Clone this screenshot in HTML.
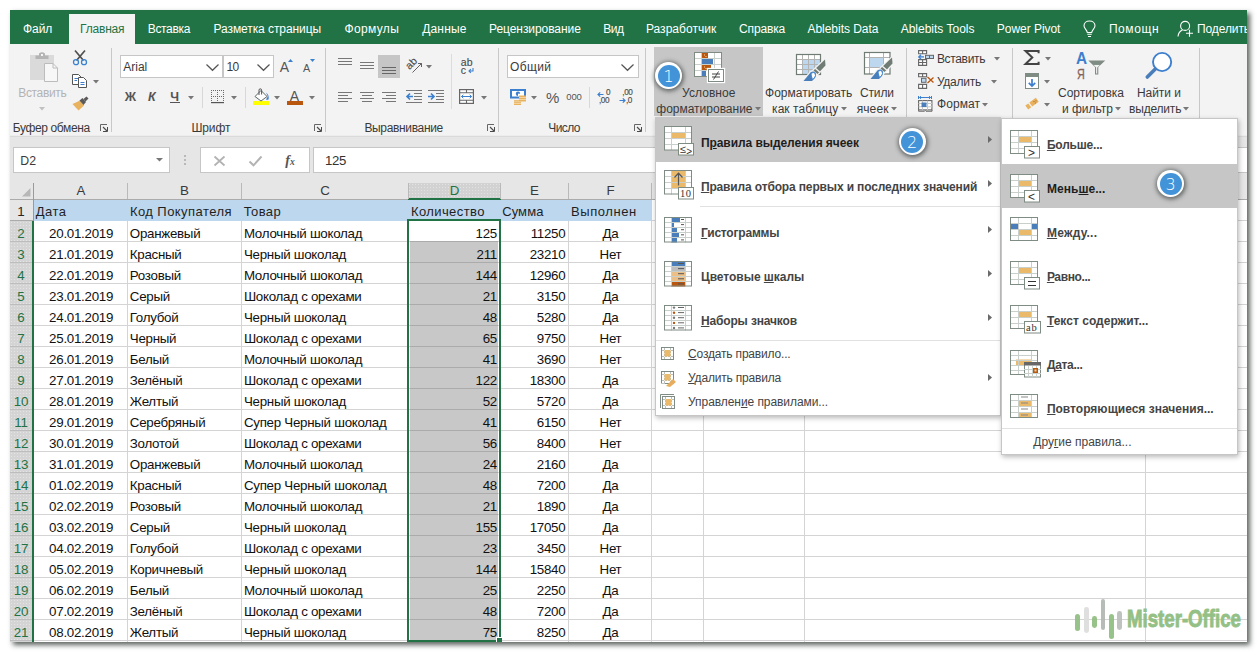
<!DOCTYPE html>
<html lang="ru"><head><meta charset="utf-8"><title>Excel</title><style>
html,body{margin:0;padding:0;background:#fff;}
body{width:1258px;height:653px;overflow:hidden;position:relative;font-family:"Liberation Sans",sans-serif;}
#win{position:absolute;left:10px;top:10px;width:1237px;height:632px;overflow:hidden;background:#fff;box-shadow:3px 3px 5px 0 rgba(30,40,35,.72);}
#win div,#win span,#win svg{position:absolute;}
#win span{white-space:pre;line-height:normal;}
#win svg{overflow:visible;}
</style></head><body><div id="win">
<div style="left:0px;top:0px;width:1237px;height:34px;background:#217346;"></div>
<div style="left:0px;top:34px;width:1237px;height:92px;background:#f3f3f3;"></div>
<div style="left:0px;top:126px;width:1237px;height:64px;background:#e6e6e6;"></div>
<div style="left:0px;top:125px;width:1237px;height:1px;background:#ededed;"></div>
<div style="left:0px;top:126px;width:1237px;height:1px;background:#dadada;"></div>
<div style="left:59px;top:4px;width:66px;height:30px;background:#f3f3f3;"></div>
<span id="t1" style="top:11.74px;font-size:12px;color:#fff;letter-spacing:-0.029px;left:12.9px;">Файл</span>
<span id="t2" style="top:11.74px;font-size:12px;color:#217346;letter-spacing:-0.184px;left:70px;">Главная</span>
<span id="t3" style="top:11.74px;font-size:12px;color:#fff;letter-spacing:-0.316px;left:137.7px;">Вставка</span>
<span id="t4" style="top:11.74px;font-size:12px;color:#fff;letter-spacing:-0.081px;left:203.5px;">Разметка страницы</span>
<span id="t5" style="top:11.74px;font-size:12px;color:#fff;letter-spacing:0.369px;left:334.4px;">Формулы</span>
<span id="t6" style="top:11.74px;font-size:12px;color:#fff;letter-spacing:0.173px;left:412.2px;">Данные</span>
<span id="t7" style="top:11.74px;font-size:12px;color:#fff;letter-spacing:-0.062px;left:479px;">Рецензирование</span>
<span id="t8" style="top:11.74px;font-size:12px;color:#fff;letter-spacing:-0.473px;left:593.2px;">Вид</span>
<span id="t9" style="top:11.74px;font-size:12px;color:#fff;letter-spacing:0.038px;left:635.9px;">Разработчик</span>
<span id="t10" style="top:11.74px;font-size:12px;color:#fff;letter-spacing:-0.14px;left:729px;">Справка</span>
<span id="t11" style="top:11.74px;font-size:12px;color:#fff;letter-spacing:-0.037px;left:797.5px;">Ablebits Data</span>
<span id="t12" style="top:11.74px;font-size:12px;color:#fff;letter-spacing:-0.002px;left:890.7px;">Ablebits Tools</span>
<span id="t13" style="top:11.74px;font-size:12px;color:#fff;letter-spacing:-0.039px;left:986.8px;">Power Pivot</span>
<span id="t14" style="top:11.74px;font-size:12px;color:#fff;letter-spacing:0.578px;left:1098.9px;">Помощн</span>
<span id="t15" style="top:11.74px;font-size:12px;color:#fff;letter-spacing:-0.1px;left:1187px;">Поделиться</span>
<div style="left:101px;top:38px;width:1px;height:84px;background:#c8c8c8;"></div>
<div style="left:315px;top:38px;width:1px;height:84px;background:#c8c8c8;"></div>
<div style="left:488px;top:38px;width:1px;height:84px;background:#c8c8c8;"></div>
<div style="left:635px;top:38px;width:1px;height:84px;background:#c8c8c8;"></div>
<div style="left:896px;top:38px;width:1px;height:84px;background:#c8c8c8;"></div>
<div style="left:1002px;top:38px;width:1px;height:84px;background:#c8c8c8;"></div>
<div style="left:1189px;top:38px;width:1px;height:84px;background:#c8c8c8;"></div>
<div style="left:192px;top:77px;width:1px;height:21px;background:#d8d8d8;"></div>
<div style="left:235px;top:77px;width:1px;height:21px;background:#d8d8d8;"></div>
<div style="left:579px;top:77px;width:1px;height:21px;background:#d8d8d8;"></div>
<div style="left:441px;top:44px;width:1px;height:55px;background:#dcdcdc;"></div>
<span id="t16" style="top:111.24px;font-size:12px;color:#3a3a3a;letter-spacing:-0.362px;left:2.7px;">Буфер обмена</span>
<span id="t17" style="top:111.24px;font-size:12px;color:#3a3a3a;letter-spacing:-0.097px;left:181.4px;">Шрифт</span>
<span id="t18" style="top:111.24px;font-size:12px;color:#3a3a3a;letter-spacing:-0.342px;left:354.4px;">Выравнивание</span>
<span id="t19" style="top:111.24px;font-size:12px;color:#3a3a3a;letter-spacing:-0.603px;left:538.3px;">Число</span>
<svg style="left:90px;top:114px;" width="9" height="9" viewBox="0 0 9 9"><path d="M0.5 7V0.5H7" fill="none" stroke="#666" stroke-width="1"/><path d="M3 3L7 7" fill="none" stroke="#4a4a4a" stroke-width="1.1"/><path d="M7.5 3V7.5H3" fill="none" stroke="#4a4a4a" stroke-width="1"/></svg>
<svg style="left:304px;top:114px;" width="9" height="9" viewBox="0 0 9 9"><path d="M0.5 7V0.5H7" fill="none" stroke="#666" stroke-width="1"/><path d="M3 3L7 7" fill="none" stroke="#4a4a4a" stroke-width="1.1"/><path d="M7.5 3V7.5H3" fill="none" stroke="#4a4a4a" stroke-width="1"/></svg>
<svg style="left:477px;top:114px;" width="9" height="9" viewBox="0 0 9 9"><path d="M0.5 7V0.5H7" fill="none" stroke="#666" stroke-width="1"/><path d="M3 3L7 7" fill="none" stroke="#4a4a4a" stroke-width="1.1"/><path d="M7.5 3V7.5H3" fill="none" stroke="#4a4a4a" stroke-width="1"/></svg>
<svg style="left:624px;top:114px;" width="9" height="9" viewBox="0 0 9 9"><path d="M0.5 7V0.5H7" fill="none" stroke="#666" stroke-width="1"/><path d="M3 3L7 7" fill="none" stroke="#4a4a4a" stroke-width="1.1"/><path d="M7.5 3V7.5H3" fill="none" stroke="#4a4a4a" stroke-width="1"/></svg>
<span id="t20" style="top:75.54px;font-size:12px;color:#b3b3b3;letter-spacing:-0.347px;left:8.3px;">Вставить</span>
<svg style="left:29.4px;top:96.8px;" width="6" height="4" viewBox="0 0 6 4"><path d="M0 0h6l-3 3.5z" fill="#c0c0c0"/></svg>
<svg style="left:83.3px;top:70px;" width="6" height="4" viewBox="0 0 6 4"><path d="M0 0h6l-3 3.5z" fill="#777"/></svg>
<div style="left:110px;top:45px;width:103px;height:23px;background:#fff;box-sizing:border-box;border:1px solid #c6c6c6;"></div>
<div style="left:213px;top:45px;width:51px;height:23px;background:#fff;box-sizing:border-box;border:1px solid #c6c6c6;"></div>
<span id="t21" style="top:49.94px;font-size:12px;color:#3a3a3a;letter-spacing:0.017px;left:113.2px;">Arial</span>
<span id="t22" style="top:49.94px;font-size:12px;color:#3a3a3a;letter-spacing:-0.68px;left:216.4px;">10</span>
<svg style="left:196px;top:54px;" width="13" height="7" viewBox="0 0 13 7"><path d="M0.5 0.5L6.5 6.3L12.5 0.5" fill="none" stroke="#555" stroke-width="1.2"/></svg>
<svg style="left:247.4px;top:54px;" width="13" height="7" viewBox="0 0 13 7"><path d="M0.5 0.5L6.5 6.3L12.5 0.5" fill="none" stroke="#555" stroke-width="1.2"/></svg>
<span id="t23" style="top:48.73px;font-size:14px;color:#555;left:269.8px;">A</span>
<span id="t24" style="top:51.63px;font-size:10.8px;color:#555;left:293px;">A</span>
<svg style="left:278px;top:49px;" width="5" height="3" viewBox="0 0 5 3"><path d="M0 3L2.5 0L5 3z" fill="#3b7fce"/></svg>
<svg style="left:300px;top:49px;" width="5" height="3" viewBox="0 0 5 3"><path d="M0 0L2.5 3L5 0z" fill="#3b7fce"/></svg>
<span id="t25" style="top:79.69px;font-size:12.5px;color:#555;font-weight:700;letter-spacing:2.488px;left:114.7px;">Ж</span>
<span id="t26" style="top:79.69px;font-size:12.5px;color:#555;font-weight:700;font-style:italic;letter-spacing:2.113px;left:138.1px;">К</span>
<span id="t27" style="top:79.69px;font-size:12.5px;color:#555;font-weight:700;letter-spacing:1.303px;left:160.3px;">Ч</span>
<div style="left:160px;top:92px;width:10px;height:1.3px;background:#555;"></div>
<svg style="left:178.3px;top:85.9px;" width="6" height="4" viewBox="0 0 6 4"><path d="M0 0h6l-3 3.5z" fill="#777"/></svg>
<svg style="left:221.3px;top:85.9px;" width="6" height="4" viewBox="0 0 6 4"><path d="M0 0h6l-3 3.5z" fill="#777"/></svg>
<svg style="left:264.4px;top:85.9px;" width="6" height="4" viewBox="0 0 6 4"><path d="M0 0h6l-3 3.5z" fill="#777"/></svg>
<svg style="left:298.5px;top:85.9px;" width="6" height="4" viewBox="0 0 6 4"><path d="M0 0h6l-3 3.5z" fill="#777"/></svg>
<div style="left:243px;top:91px;width:16px;height:4px;background:#ffff00;"></div>
<div style="left:277px;top:91px;width:16px;height:4px;background:#b8570d;"></div>
<span id="t28" style="top:77.83px;font-size:14px;color:#555;left:279.7px;">A</span>
<div style="left:368px;top:45px;width:22px;height:23px;background:#c6c6c6;"></div>
<div style="left:328px;top:48px;width:14px;height:1px;background:#777;"></div>
<div style="left:328px;top:51px;width:14px;height:1px;background:#777;"></div>
<div style="left:328px;top:54px;width:14px;height:1px;background:#777;"></div>
<div style="left:350px;top:52px;width:14px;height:1px;background:#777;"></div>
<div style="left:350px;top:55px;width:14px;height:1px;background:#777;"></div>
<div style="left:350px;top:58px;width:14px;height:1px;background:#777;"></div>
<div style="left:372px;top:57px;width:14px;height:1px;background:#666;"></div>
<div style="left:372px;top:60px;width:14px;height:1px;background:#666;"></div>
<div style="left:372px;top:63px;width:14px;height:1px;background:#666;"></div>
<div style="left:328px;top:82px;width:14px;height:1px;background:#777;"></div>
<div style="left:328px;top:85px;width:10px;height:1px;background:#777;"></div>
<div style="left:328px;top:88px;width:14px;height:1px;background:#777;"></div>
<div style="left:328px;top:91px;width:10px;height:1px;background:#777;"></div>
<div style="left:350px;top:82px;width:14px;height:1px;background:#777;"></div>
<div style="left:352px;top:85px;width:10px;height:1px;background:#777;"></div>
<div style="left:350px;top:88px;width:14px;height:1px;background:#777;"></div>
<div style="left:352px;top:91px;width:10px;height:1px;background:#777;"></div>
<div style="left:372px;top:82px;width:14px;height:1px;background:#777;"></div>
<div style="left:376px;top:85px;width:10px;height:1px;background:#777;"></div>
<div style="left:372px;top:88px;width:14px;height:1px;background:#777;"></div>
<div style="left:376px;top:91px;width:10px;height:1px;background:#777;"></div>
<div style="left:396px;top:80px;width:16px;height:1px;background:#777;"></div>
<div style="left:404px;top:83px;width:8px;height:1px;background:#777;"></div>
<div style="left:404px;top:86px;width:8px;height:1px;background:#777;"></div>
<div style="left:404px;top:89px;width:8px;height:1px;background:#777;"></div>
<div style="left:396px;top:92px;width:16px;height:1px;background:#777;"></div>
<div style="left:418px;top:80px;width:16px;height:1px;background:#777;"></div>
<div style="left:426px;top:83px;width:8px;height:1px;background:#777;"></div>
<div style="left:426px;top:86px;width:8px;height:1px;background:#777;"></div>
<div style="left:426px;top:89px;width:8px;height:1px;background:#777;"></div>
<div style="left:418px;top:92px;width:16px;height:1px;background:#777;"></div>
<svg style="left:396px;top:82px;" width="8" height="9" viewBox="0 0 8 9"><path d="M7 4.5H1M4 1.5L1 4.5L4 7.5" fill="none" stroke="#3b7fce" stroke-width="1.6"/></svg>
<svg style="left:418px;top:82px;" width="8" height="9" viewBox="0 0 8 9"><path d="M0 4.5H6M3 1.5L6 4.5L3 7.5" fill="none" stroke="#3b7fce" stroke-width="1.6"/></svg>
<svg style="left:415.5px;top:55.1px;" width="6" height="4" viewBox="0 0 6 4"><path d="M0 0h6l-3 3.5z" fill="#777"/></svg>
<svg style="left:470.5px;top:85.9px;" width="6" height="4" viewBox="0 0 6 4"><path d="M0 0h6l-3 3.5z" fill="#777"/></svg>
<svg style="left:521.4px;top:85.9px;" width="6" height="4" viewBox="0 0 6 4"><path d="M0 0h6l-3 3.5z" fill="#777"/></svg>
<div style="left:497px;top:45px;width:132px;height:23px;background:#fff;box-sizing:border-box;border:1px solid #c6c6c6;"></div>
<span id="t29" style="top:49.94px;font-size:12px;color:#3a3a3a;letter-spacing:0.42px;left:499.9px;">Общий</span>
<svg style="left:611.2px;top:54px;" width="13" height="7" viewBox="0 0 13 7"><path d="M0.5 0.5L6.5 6.3L12.5 0.5" fill="none" stroke="#555" stroke-width="1.2"/></svg>
<span id="t30" style="top:79.02px;font-size:15px;color:#555;letter-spacing:-0.144px;left:536px;">%</span>
<span id="t31" style="top:81.20px;font-size:9.5px;color:#555;letter-spacing:-0.153px;left:556.3px;">000</span>
<div style="left:644px;top:37px;width:109px;height:69px;background:#c6c6c6;"></div>
<span id="t32" style="top:75.64px;font-size:12px;color:#3a3a3a;letter-spacing:0.064px;left:672px;">Условное</span>
<span id="t33" style="top:92.04px;font-size:12px;color:#3a3a3a;letter-spacing:-0.011px;left:646.3px;">форматирование</span>
<svg style="left:744.5px;top:96.8px;" width="6" height="4" viewBox="0 0 6 4"><path d="M0 0h6l-3 3.5z" fill="#777"/></svg>
<span id="t34" style="top:75.64px;font-size:12px;color:#3a3a3a;letter-spacing:0.009px;left:755px;">Форматировать</span>
<span id="t35" style="top:92.04px;font-size:12px;color:#3a3a3a;letter-spacing:0.044px;left:762.1px;">как таблицу</span>
<svg style="left:830.7px;top:96.8px;" width="6" height="4" viewBox="0 0 6 4"><path d="M0 0h6l-3 3.5z" fill="#777"/></svg>
<span id="t36" style="top:75.64px;font-size:12px;color:#3a3a3a;letter-spacing:-0.156px;left:850px;">Стили</span>
<span id="t37" style="top:92.04px;font-size:12px;color:#3a3a3a;letter-spacing:0.088px;left:846.7px;">ячеек</span>
<svg style="left:880.6px;top:96.8px;" width="6" height="4" viewBox="0 0 6 4"><path d="M0 0h6l-3 3.5z" fill="#777"/></svg>
<span id="t38" style="top:41.64px;font-size:12px;color:#3a3a3a;letter-spacing:-0.334px;left:926.9px;">Вставить</span>
<span id="t39" style="top:64.74px;font-size:12px;color:#3a3a3a;letter-spacing:-0.247px;left:926.9px;">Удалить</span>
<span id="t40" style="top:87.34px;font-size:12px;color:#3a3a3a;letter-spacing:0.077px;left:927.1px;">Формат</span>
<svg style="left:984.4px;top:47.2px;" width="6" height="4" viewBox="0 0 6 4"><path d="M0 0h6l-3 3.5z" fill="#777"/></svg>
<svg style="left:980.8px;top:70.1px;" width="6" height="4" viewBox="0 0 6 4"><path d="M0 0h6l-3 3.5z" fill="#777"/></svg>
<svg style="left:972.4px;top:93px;" width="6" height="4" viewBox="0 0 6 4"><path d="M0 0h6l-3 3.5z" fill="#777"/></svg>
<svg style="left:1035.3px;top:46.6px;" width="6" height="4" viewBox="0 0 6 4"><path d="M0 0h6l-3 3.5z" fill="#777"/></svg>
<svg style="left:1033.6px;top:69.7px;" width="6" height="4" viewBox="0 0 6 4"><path d="M0 0h6l-3 3.5z" fill="#777"/></svg>
<svg style="left:1033.6px;top:92.7px;" width="6" height="4" viewBox="0 0 6 4"><path d="M0 0h6l-3 3.5z" fill="#777"/></svg>
<span id="t41" style="top:75.64px;font-size:12px;color:#3a3a3a;letter-spacing:0.014px;left:1048px;">Сортировка</span>
<span id="t42" style="top:92.04px;font-size:12px;color:#3a3a3a;letter-spacing:-0.026px;left:1052px;">и фильтр</span>
<svg style="left:1105.3px;top:96.8px;" width="6" height="4" viewBox="0 0 6 4"><path d="M0 0h6l-3 3.5z" fill="#777"/></svg>
<span id="t43" style="top:75.64px;font-size:12px;color:#3a3a3a;letter-spacing:-0.04px;left:1126.9px;">Найти и</span>
<span id="t44" style="top:92.04px;font-size:12px;color:#3a3a3a;letter-spacing:-0.204px;left:1119.1px;">выделить</span>
<svg style="left:1173.4px;top:96.8px;" width="6" height="4" viewBox="0 0 6 4"><path d="M0 0h6l-3 3.5z" fill="#777"/></svg>
<div style="left:3px;top:137px;width:157px;height:26px;background:#fff;box-sizing:border-box;border:1px solid #c6c6c6;"></div>
<div style="left:190px;top:137px;width:110px;height:26px;background:#fff;box-sizing:border-box;border:1px solid #c6c6c6;"></div>
<div style="left:303px;top:137px;width:940px;height:26px;background:#fff;box-sizing:border-box;border:1px solid #c6c6c6;"></div>
<span id="t45" style="top:144.17px;font-size:12.3px;color:#3a3a3a;letter-spacing:0.033px;left:10.3px;">D2</span>
<svg style="left:146px;top:148.3px;" width="7" height="4" viewBox="0 0 7 4"><path d="M0 0h7l-3.5 3.5z" fill="#777"/></svg>
<div style="left:174px;top:145px;width:2px;height:2px;background:#b9b9b9;"></div>
<div style="left:174px;top:149px;width:2px;height:2px;background:#b9b9b9;"></div>
<div style="left:174px;top:153px;width:2px;height:2px;background:#b9b9b9;"></div>
<svg style="left:203.6px;top:145.6px;" width="11" height="10" viewBox="0 0 11 10"><path d="M0.5 0.5L10.5 9.5M10.5 0.5L0.5 9.5" stroke="#b2b2b2" stroke-width="1.700" fill="none"/></svg>
<svg style="left:238.8px;top:145.6px;" width="13" height="10" viewBox="0 0 13 10"><path d="M0.5 5.5L4.5 9.3L12.5 0.5" stroke="#b2b2b2" stroke-width="1.900" fill="none"/></svg>
<span id="t46" style="top:142.53px;font-size:14px;color:#555;font-weight:700;font-style:italic;font-family:'Liberation Serif',serif;left:275.2px;">f</span>
<span id="t47" style="top:146.74px;font-size:9.5px;color:#555;font-weight:700;font-style:italic;font-family:'Liberation Serif',serif;left:280.1px;">x</span>
<span id="t48" style="top:143.35px;font-size:13.2px;color:#333;letter-spacing:-0.272px;left:315px;">125</span>
<div style="left:0px;top:190px;width:1237px;height:442px;background:#fff;"></div>
<div style="left:24px;top:210px;width:1213px;height:1px;background:#d4d4d4;"></div>
<div style="left:24px;top:231px;width:1213px;height:1px;background:#d4d4d4;"></div>
<div style="left:24px;top:252px;width:1213px;height:1px;background:#d4d4d4;"></div>
<div style="left:24px;top:273px;width:1213px;height:1px;background:#d4d4d4;"></div>
<div style="left:24px;top:294px;width:1213px;height:1px;background:#d4d4d4;"></div>
<div style="left:24px;top:315px;width:1213px;height:1px;background:#d4d4d4;"></div>
<div style="left:24px;top:336px;width:1213px;height:1px;background:#d4d4d4;"></div>
<div style="left:24px;top:357px;width:1213px;height:1px;background:#d4d4d4;"></div>
<div style="left:24px;top:378px;width:1213px;height:1px;background:#d4d4d4;"></div>
<div style="left:24px;top:399px;width:1213px;height:1px;background:#d4d4d4;"></div>
<div style="left:24px;top:420px;width:1213px;height:1px;background:#d4d4d4;"></div>
<div style="left:24px;top:441px;width:1213px;height:1px;background:#d4d4d4;"></div>
<div style="left:24px;top:462px;width:1213px;height:1px;background:#d4d4d4;"></div>
<div style="left:24px;top:483px;width:1213px;height:1px;background:#d4d4d4;"></div>
<div style="left:24px;top:504px;width:1213px;height:1px;background:#d4d4d4;"></div>
<div style="left:24px;top:525px;width:1213px;height:1px;background:#d4d4d4;"></div>
<div style="left:24px;top:546px;width:1213px;height:1px;background:#d4d4d4;"></div>
<div style="left:24px;top:567px;width:1213px;height:1px;background:#d4d4d4;"></div>
<div style="left:24px;top:588px;width:1213px;height:1px;background:#d4d4d4;"></div>
<div style="left:24px;top:609px;width:1213px;height:1px;background:#d4d4d4;"></div>
<div style="left:24px;top:630px;width:1213px;height:1px;background:#d4d4d4;"></div>
<div style="left:117px;top:190px;width:1px;height:442px;background:#d4d4d4;"></div>
<div style="left:231px;top:190px;width:1px;height:442px;background:#d4d4d4;"></div>
<div style="left:398px;top:190px;width:1px;height:442px;background:#d4d4d4;"></div>
<div style="left:490px;top:190px;width:1px;height:442px;background:#d4d4d4;"></div>
<div style="left:558px;top:190px;width:1px;height:442px;background:#d4d4d4;"></div>
<div style="left:641px;top:190px;width:1px;height:442px;background:#d4d4d4;"></div>
<div style="left:693px;top:190px;width:1px;height:442px;background:#d4d4d4;"></div>
<div style="left:794px;top:190px;width:1px;height:442px;background:#d4d4d4;"></div>
<div style="left:1135px;top:190px;width:1px;height:442px;background:#d4d4d4;"></div>
<div style="left:398px;top:173px;width:92px;height:16px;background:#d2d2d2;background-image:radial-gradient(circle,#e2e2e2 0.700px,transparent 0.900px);background-size:3px 3px;"></div>
<div style="left:0px;top:189px;width:1237px;height:1px;background:#ababab;"></div>
<div style="left:398px;top:188px;width:93px;height:2px;background:#217346;"></div>
<div style="left:23px;top:173px;width:1px;height:16px;background:#b9b9b9;"></div>
<div style="left:117px;top:173px;width:1px;height:16px;background:#b9b9b9;"></div>
<div style="left:231px;top:173px;width:1px;height:16px;background:#b9b9b9;"></div>
<div style="left:398px;top:173px;width:1px;height:16px;background:#b9b9b9;"></div>
<div style="left:490px;top:173px;width:1px;height:16px;background:#b9b9b9;"></div>
<div style="left:558px;top:173px;width:1px;height:16px;background:#b9b9b9;"></div>
<div style="left:641px;top:173px;width:1px;height:16px;background:#b9b9b9;"></div>
<div style="left:693px;top:173px;width:1px;height:16px;background:#b9b9b9;"></div>
<div style="left:794px;top:173px;width:1px;height:16px;background:#b9b9b9;"></div>
<div style="left:1135px;top:173px;width:1px;height:16px;background:#b9b9b9;"></div>
<svg style="left:11.5px;top:177.5px;" width="8.5" height="8.5" viewBox="0 0 8.5 8.5"><path d="M8.500 0V8.500H0z" fill="#b7b7b7"/></svg>
<span id="t49" style="top:173.34px;font-size:13.33px;color:#3a3a3a;left:-29px;width:200px;text-align:center;">A</span>
<span id="t50" style="top:173.34px;font-size:13.33px;color:#3a3a3a;left:74.5px;width:200px;text-align:center;">B</span>
<span id="t51" style="top:173.34px;font-size:13.33px;color:#3a3a3a;left:215px;width:200px;text-align:center;">C</span>
<span id="t52" style="top:173.34px;font-size:13.33px;color:#217346;left:344.5px;width:200px;text-align:center;">D</span>
<span id="t53" style="top:173.34px;font-size:13.33px;color:#3a3a3a;left:424.5px;width:200px;text-align:center;">E</span>
<span id="t54" style="top:173.34px;font-size:13.33px;color:#3a3a3a;left:500.5px;width:200px;text-align:center;">F</span>
<div style="left:0px;top:190px;width:23px;height:21px;background:#e6e6e6;"></div>
<div style="left:0px;top:211px;width:23px;height:421px;background:#d4d4d4;background-image:radial-gradient(circle,#e4e4e4 0.700px,transparent 0.900px);background-size:3px 3px;"></div>
<div style="left:0px;top:210px;width:23px;height:1px;background:#ababab;"></div>
<div style="left:0px;top:231px;width:23px;height:1px;background:#bdbdbd;"></div>
<div style="left:0px;top:252px;width:23px;height:1px;background:#bdbdbd;"></div>
<div style="left:0px;top:273px;width:23px;height:1px;background:#bdbdbd;"></div>
<div style="left:0px;top:294px;width:23px;height:1px;background:#bdbdbd;"></div>
<div style="left:0px;top:315px;width:23px;height:1px;background:#bdbdbd;"></div>
<div style="left:0px;top:336px;width:23px;height:1px;background:#bdbdbd;"></div>
<div style="left:0px;top:357px;width:23px;height:1px;background:#bdbdbd;"></div>
<div style="left:0px;top:378px;width:23px;height:1px;background:#bdbdbd;"></div>
<div style="left:0px;top:399px;width:23px;height:1px;background:#bdbdbd;"></div>
<div style="left:0px;top:420px;width:23px;height:1px;background:#bdbdbd;"></div>
<div style="left:0px;top:441px;width:23px;height:1px;background:#bdbdbd;"></div>
<div style="left:0px;top:462px;width:23px;height:1px;background:#bdbdbd;"></div>
<div style="left:0px;top:483px;width:23px;height:1px;background:#bdbdbd;"></div>
<div style="left:0px;top:504px;width:23px;height:1px;background:#bdbdbd;"></div>
<div style="left:0px;top:525px;width:23px;height:1px;background:#bdbdbd;"></div>
<div style="left:0px;top:546px;width:23px;height:1px;background:#bdbdbd;"></div>
<div style="left:0px;top:567px;width:23px;height:1px;background:#bdbdbd;"></div>
<div style="left:0px;top:588px;width:23px;height:1px;background:#bdbdbd;"></div>
<div style="left:0px;top:609px;width:23px;height:1px;background:#bdbdbd;"></div>
<div style="left:0px;top:630px;width:23px;height:1px;background:#bdbdbd;"></div>
<div style="left:23px;top:173px;width:1px;height:38px;background:#9a9a9a;"></div>
<div style="left:22px;top:211px;width:2px;height:421px;background:#217346;"></div>
<span id="t55" style="top:194.04px;font-size:13.33px;color:#262626;letter-spacing:-0.3px;left:-89.1px;width:200px;text-align:center;">1</span>
<span id="t56" style="top:215.74px;font-size:13.33px;color:#217346;letter-spacing:-0.3px;left:-89.1px;width:200px;text-align:center;">2</span>
<span id="t57" style="top:236.74px;font-size:13.33px;color:#217346;letter-spacing:-0.3px;left:-89.1px;width:200px;text-align:center;">3</span>
<span id="t58" style="top:257.74px;font-size:13.33px;color:#217346;letter-spacing:-0.3px;left:-89.1px;width:200px;text-align:center;">4</span>
<span id="t59" style="top:278.74px;font-size:13.33px;color:#217346;letter-spacing:-0.3px;left:-89.1px;width:200px;text-align:center;">5</span>
<span id="t60" style="top:299.74px;font-size:13.33px;color:#217346;letter-spacing:-0.3px;left:-89.1px;width:200px;text-align:center;">6</span>
<span id="t61" style="top:320.74px;font-size:13.33px;color:#217346;letter-spacing:-0.3px;left:-89.1px;width:200px;text-align:center;">7</span>
<span id="t62" style="top:341.74px;font-size:13.33px;color:#217346;letter-spacing:-0.3px;left:-89.1px;width:200px;text-align:center;">8</span>
<span id="t63" style="top:362.74px;font-size:13.33px;color:#217346;letter-spacing:-0.3px;left:-89.1px;width:200px;text-align:center;">9</span>
<span id="t64" style="top:383.74px;font-size:13.33px;color:#217346;letter-spacing:-0.3px;left:-89.1px;width:200px;text-align:center;">10</span>
<span id="t65" style="top:404.74px;font-size:13.33px;color:#217346;letter-spacing:-0.3px;left:-89.1px;width:200px;text-align:center;">11</span>
<span id="t66" style="top:425.74px;font-size:13.33px;color:#217346;letter-spacing:-0.3px;left:-89.1px;width:200px;text-align:center;">12</span>
<span id="t67" style="top:446.74px;font-size:13.33px;color:#217346;letter-spacing:-0.3px;left:-89.1px;width:200px;text-align:center;">13</span>
<span id="t68" style="top:467.74px;font-size:13.33px;color:#217346;letter-spacing:-0.3px;left:-89.1px;width:200px;text-align:center;">14</span>
<span id="t69" style="top:488.74px;font-size:13.33px;color:#217346;letter-spacing:-0.3px;left:-89.1px;width:200px;text-align:center;">15</span>
<span id="t70" style="top:509.74px;font-size:13.33px;color:#217346;letter-spacing:-0.3px;left:-89.1px;width:200px;text-align:center;">16</span>
<span id="t71" style="top:530.74px;font-size:13.33px;color:#217346;letter-spacing:-0.3px;left:-89.1px;width:200px;text-align:center;">17</span>
<span id="t72" style="top:551.74px;font-size:13.33px;color:#217346;letter-spacing:-0.3px;left:-89.1px;width:200px;text-align:center;">18</span>
<span id="t73" style="top:572.74px;font-size:13.33px;color:#217346;letter-spacing:-0.3px;left:-89.1px;width:200px;text-align:center;">19</span>
<span id="t74" style="top:593.74px;font-size:13.33px;color:#217346;letter-spacing:-0.3px;left:-89.1px;width:200px;text-align:center;">20</span>
<span id="t75" style="top:614.74px;font-size:13.33px;color:#217346;letter-spacing:-0.3px;left:-89.1px;width:200px;text-align:center;">21</span>
<div style="left:24px;top:190px;width:618px;height:21px;background:#bdd7ee;"></div>
<span id="t76" style="top:193.63px;font-size:13px;color:#1f1f1f;letter-spacing:0.426px;left:25.8px;">Дата</span>
<span id="t77" style="top:193.63px;font-size:13px;color:#1f1f1f;letter-spacing:0.44px;left:119.9px;">Код Покупателя</span>
<span id="t78" style="top:193.63px;font-size:13px;color:#1f1f1f;letter-spacing:0.362px;left:233.8px;">Товар</span>
<span id="t79" style="top:193.63px;font-size:13px;color:#1f1f1f;letter-spacing:0.419px;left:400.9px;">Количество</span>
<span id="t80" style="top:193.63px;font-size:13px;color:#1f1f1f;letter-spacing:0.088px;left:492.2px;">Сумма</span>
<span id="t81" style="top:193.63px;font-size:13px;color:#1f1f1f;letter-spacing:0.564px;left:561.1px;">Выполнен</span>
<div style="left:400px;top:232px;width:88px;height:398px;background:#c8c8c8;"></div>
<div style="left:400px;top:231px;width:88px;height:1px;background:#ababab;"></div>
<div style="left:400px;top:252px;width:88px;height:1px;background:#ababab;"></div>
<div style="left:400px;top:273px;width:88px;height:1px;background:#ababab;"></div>
<div style="left:400px;top:294px;width:88px;height:1px;background:#ababab;"></div>
<div style="left:400px;top:315px;width:88px;height:1px;background:#ababab;"></div>
<div style="left:400px;top:336px;width:88px;height:1px;background:#ababab;"></div>
<div style="left:400px;top:357px;width:88px;height:1px;background:#ababab;"></div>
<div style="left:400px;top:378px;width:88px;height:1px;background:#ababab;"></div>
<div style="left:400px;top:399px;width:88px;height:1px;background:#ababab;"></div>
<div style="left:400px;top:420px;width:88px;height:1px;background:#ababab;"></div>
<div style="left:400px;top:441px;width:88px;height:1px;background:#ababab;"></div>
<div style="left:400px;top:462px;width:88px;height:1px;background:#ababab;"></div>
<div style="left:400px;top:483px;width:88px;height:1px;background:#ababab;"></div>
<div style="left:400px;top:504px;width:88px;height:1px;background:#ababab;"></div>
<div style="left:400px;top:525px;width:88px;height:1px;background:#ababab;"></div>
<div style="left:400px;top:546px;width:88px;height:1px;background:#ababab;"></div>
<div style="left:400px;top:567px;width:88px;height:1px;background:#ababab;"></div>
<div style="left:400px;top:588px;width:88px;height:1px;background:#ababab;"></div>
<div style="left:400px;top:609px;width:88px;height:1px;background:#ababab;"></div>
<span id="t82" style="top:215.84px;font-size:13.33px;color:#111;letter-spacing:-0.27px;left:39.1px;">20.01.2019</span>
<span id="t83" style="top:215.84px;font-size:13.33px;color:#111;letter-spacing:-0.27px;left:119.8px;">Оранжевый</span>
<span id="t84" style="top:215.84px;font-size:13.33px;color:#111;letter-spacing:-0.27px;left:233.9px;">Молочный шоколад</span>
<span id="t85" style="top:215.84px;font-size:13.33px;color:#111;letter-spacing:-0.27px;right:750.03px;">125</span>
<span id="t86" style="top:215.84px;font-size:13.33px;color:#111;letter-spacing:-0.27px;right:681.63px;">11250</span>
<span id="t87" style="top:215.84px;font-size:13.33px;color:#111;letter-spacing:-0.27px;left:500.5px;width:200px;text-align:center;">Да</span>
<span id="t88" style="top:236.84px;font-size:13.33px;color:#111;letter-spacing:-0.27px;left:39.1px;">21.01.2019</span>
<span id="t89" style="top:236.84px;font-size:13.33px;color:#111;letter-spacing:-0.27px;left:119.8px;">Красный</span>
<span id="t90" style="top:236.84px;font-size:13.33px;color:#111;letter-spacing:-0.27px;left:233.9px;">Черный шоколад</span>
<span id="t91" style="top:236.84px;font-size:13.33px;color:#111;letter-spacing:-0.27px;right:750.03px;">211</span>
<span id="t92" style="top:236.84px;font-size:13.33px;color:#111;letter-spacing:-0.27px;right:681.63px;">23210</span>
<span id="t93" style="top:236.84px;font-size:13.33px;color:#111;letter-spacing:-0.27px;left:500.5px;width:200px;text-align:center;">Нет</span>
<span id="t94" style="top:257.84px;font-size:13.33px;color:#111;letter-spacing:-0.27px;left:39.1px;">22.01.2019</span>
<span id="t95" style="top:257.84px;font-size:13.33px;color:#111;letter-spacing:-0.27px;left:119.8px;">Розовый</span>
<span id="t96" style="top:257.84px;font-size:13.33px;color:#111;letter-spacing:-0.27px;left:233.9px;">Молочный шоколад</span>
<span id="t97" style="top:257.84px;font-size:13.33px;color:#111;letter-spacing:-0.27px;right:750.03px;">144</span>
<span id="t98" style="top:257.84px;font-size:13.33px;color:#111;letter-spacing:-0.27px;right:681.63px;">12960</span>
<span id="t99" style="top:257.84px;font-size:13.33px;color:#111;letter-spacing:-0.27px;left:500.5px;width:200px;text-align:center;">Да</span>
<span id="t100" style="top:278.84px;font-size:13.33px;color:#111;letter-spacing:-0.27px;left:39.1px;">23.01.2019</span>
<span id="t101" style="top:278.84px;font-size:13.33px;color:#111;letter-spacing:-0.27px;left:119.8px;">Серый</span>
<span id="t102" style="top:278.84px;font-size:13.33px;color:#111;letter-spacing:-0.27px;left:233.9px;">Шоколад с орехами</span>
<span id="t103" style="top:278.84px;font-size:13.33px;color:#111;letter-spacing:-0.27px;right:750.03px;">21</span>
<span id="t104" style="top:278.84px;font-size:13.33px;color:#111;letter-spacing:-0.27px;right:681.63px;">3150</span>
<span id="t105" style="top:278.84px;font-size:13.33px;color:#111;letter-spacing:-0.27px;left:500.5px;width:200px;text-align:center;">Да</span>
<span id="t106" style="top:299.84px;font-size:13.33px;color:#111;letter-spacing:-0.27px;left:39.1px;">24.01.2019</span>
<span id="t107" style="top:299.84px;font-size:13.33px;color:#111;letter-spacing:-0.27px;left:119.8px;">Голубой</span>
<span id="t108" style="top:299.84px;font-size:13.33px;color:#111;letter-spacing:-0.27px;left:233.9px;">Черный шоколад</span>
<span id="t109" style="top:299.84px;font-size:13.33px;color:#111;letter-spacing:-0.27px;right:750.03px;">48</span>
<span id="t110" style="top:299.84px;font-size:13.33px;color:#111;letter-spacing:-0.27px;right:681.63px;">5280</span>
<span id="t111" style="top:299.84px;font-size:13.33px;color:#111;letter-spacing:-0.27px;left:500.5px;width:200px;text-align:center;">Да</span>
<span id="t112" style="top:320.84px;font-size:13.33px;color:#111;letter-spacing:-0.27px;left:39.1px;">25.01.2019</span>
<span id="t113" style="top:320.84px;font-size:13.33px;color:#111;letter-spacing:-0.27px;left:119.8px;">Черный</span>
<span id="t114" style="top:320.84px;font-size:13.33px;color:#111;letter-spacing:-0.27px;left:233.9px;">Шоколад с орехами</span>
<span id="t115" style="top:320.84px;font-size:13.33px;color:#111;letter-spacing:-0.27px;right:750.03px;">65</span>
<span id="t116" style="top:320.84px;font-size:13.33px;color:#111;letter-spacing:-0.27px;right:681.63px;">9750</span>
<span id="t117" style="top:320.84px;font-size:13.33px;color:#111;letter-spacing:-0.27px;left:500.5px;width:200px;text-align:center;">Нет</span>
<span id="t118" style="top:341.84px;font-size:13.33px;color:#111;letter-spacing:-0.27px;left:39.1px;">26.01.2019</span>
<span id="t119" style="top:341.84px;font-size:13.33px;color:#111;letter-spacing:-0.27px;left:119.8px;">Белый</span>
<span id="t120" style="top:341.84px;font-size:13.33px;color:#111;letter-spacing:-0.27px;left:233.9px;">Молочный шоколад</span>
<span id="t121" style="top:341.84px;font-size:13.33px;color:#111;letter-spacing:-0.27px;right:750.03px;">41</span>
<span id="t122" style="top:341.84px;font-size:13.33px;color:#111;letter-spacing:-0.27px;right:681.63px;">3690</span>
<span id="t123" style="top:341.84px;font-size:13.33px;color:#111;letter-spacing:-0.27px;left:500.5px;width:200px;text-align:center;">Нет</span>
<span id="t124" style="top:362.84px;font-size:13.33px;color:#111;letter-spacing:-0.27px;left:39.1px;">27.01.2019</span>
<span id="t125" style="top:362.84px;font-size:13.33px;color:#111;letter-spacing:-0.27px;left:119.8px;">Зелёный</span>
<span id="t126" style="top:362.84px;font-size:13.33px;color:#111;letter-spacing:-0.27px;left:233.9px;">Шоколад с орехами</span>
<span id="t127" style="top:362.84px;font-size:13.33px;color:#111;letter-spacing:-0.27px;right:750.03px;">122</span>
<span id="t128" style="top:362.84px;font-size:13.33px;color:#111;letter-spacing:-0.27px;right:681.63px;">18300</span>
<span id="t129" style="top:362.84px;font-size:13.33px;color:#111;letter-spacing:-0.27px;left:500.5px;width:200px;text-align:center;">Да</span>
<span id="t130" style="top:383.84px;font-size:13.33px;color:#111;letter-spacing:-0.27px;left:39.1px;">28.01.2019</span>
<span id="t131" style="top:383.84px;font-size:13.33px;color:#111;letter-spacing:-0.27px;left:119.8px;">Желтый</span>
<span id="t132" style="top:383.84px;font-size:13.33px;color:#111;letter-spacing:-0.27px;left:233.9px;">Черный шоколад</span>
<span id="t133" style="top:383.84px;font-size:13.33px;color:#111;letter-spacing:-0.27px;right:750.03px;">52</span>
<span id="t134" style="top:383.84px;font-size:13.33px;color:#111;letter-spacing:-0.27px;right:681.63px;">5720</span>
<span id="t135" style="top:383.84px;font-size:13.33px;color:#111;letter-spacing:-0.27px;left:500.5px;width:200px;text-align:center;">Да</span>
<span id="t136" style="top:404.84px;font-size:13.33px;color:#111;letter-spacing:-0.27px;left:39.1px;">29.01.2019</span>
<span id="t137" style="top:404.84px;font-size:13.33px;color:#111;letter-spacing:-0.27px;left:119.8px;">Серебряный</span>
<span id="t138" style="top:404.84px;font-size:13.33px;color:#111;letter-spacing:-0.27px;left:233.9px;">Супер Черный шоколад</span>
<span id="t139" style="top:404.84px;font-size:13.33px;color:#111;letter-spacing:-0.27px;right:750.03px;">41</span>
<span id="t140" style="top:404.84px;font-size:13.33px;color:#111;letter-spacing:-0.27px;right:681.63px;">6150</span>
<span id="t141" style="top:404.84px;font-size:13.33px;color:#111;letter-spacing:-0.27px;left:500.5px;width:200px;text-align:center;">Нет</span>
<span id="t142" style="top:425.84px;font-size:13.33px;color:#111;letter-spacing:-0.27px;left:39.1px;">30.01.2019</span>
<span id="t143" style="top:425.84px;font-size:13.33px;color:#111;letter-spacing:-0.27px;left:119.8px;">Золотой</span>
<span id="t144" style="top:425.84px;font-size:13.33px;color:#111;letter-spacing:-0.27px;left:233.9px;">Шоколад с орехами</span>
<span id="t145" style="top:425.84px;font-size:13.33px;color:#111;letter-spacing:-0.27px;right:750.03px;">56</span>
<span id="t146" style="top:425.84px;font-size:13.33px;color:#111;letter-spacing:-0.27px;right:681.63px;">8400</span>
<span id="t147" style="top:425.84px;font-size:13.33px;color:#111;letter-spacing:-0.27px;left:500.5px;width:200px;text-align:center;">Нет</span>
<span id="t148" style="top:446.84px;font-size:13.33px;color:#111;letter-spacing:-0.27px;left:39.1px;">31.01.2019</span>
<span id="t149" style="top:446.84px;font-size:13.33px;color:#111;letter-spacing:-0.27px;left:119.8px;">Оранжевый</span>
<span id="t150" style="top:446.84px;font-size:13.33px;color:#111;letter-spacing:-0.27px;left:233.9px;">Молочный шоколад</span>
<span id="t151" style="top:446.84px;font-size:13.33px;color:#111;letter-spacing:-0.27px;right:750.03px;">24</span>
<span id="t152" style="top:446.84px;font-size:13.33px;color:#111;letter-spacing:-0.27px;right:681.63px;">2160</span>
<span id="t153" style="top:446.84px;font-size:13.33px;color:#111;letter-spacing:-0.27px;left:500.5px;width:200px;text-align:center;">Да</span>
<span id="t154" style="top:467.84px;font-size:13.33px;color:#111;letter-spacing:-0.27px;left:39.1px;">01.02.2019</span>
<span id="t155" style="top:467.84px;font-size:13.33px;color:#111;letter-spacing:-0.27px;left:119.8px;">Красный</span>
<span id="t156" style="top:467.84px;font-size:13.33px;color:#111;letter-spacing:-0.27px;left:233.9px;">Супер Черный шоколад</span>
<span id="t157" style="top:467.84px;font-size:13.33px;color:#111;letter-spacing:-0.27px;right:750.03px;">48</span>
<span id="t158" style="top:467.84px;font-size:13.33px;color:#111;letter-spacing:-0.27px;right:681.63px;">7200</span>
<span id="t159" style="top:467.84px;font-size:13.33px;color:#111;letter-spacing:-0.27px;left:500.5px;width:200px;text-align:center;">Да</span>
<span id="t160" style="top:488.84px;font-size:13.33px;color:#111;letter-spacing:-0.27px;left:39.1px;">02.02.2019</span>
<span id="t161" style="top:488.84px;font-size:13.33px;color:#111;letter-spacing:-0.27px;left:119.8px;">Розовый</span>
<span id="t162" style="top:488.84px;font-size:13.33px;color:#111;letter-spacing:-0.27px;left:233.9px;">Молочный шоколад</span>
<span id="t163" style="top:488.84px;font-size:13.33px;color:#111;letter-spacing:-0.27px;right:750.03px;">21</span>
<span id="t164" style="top:488.84px;font-size:13.33px;color:#111;letter-spacing:-0.27px;right:681.63px;">1890</span>
<span id="t165" style="top:488.84px;font-size:13.33px;color:#111;letter-spacing:-0.27px;left:500.5px;width:200px;text-align:center;">Да</span>
<span id="t166" style="top:509.84px;font-size:13.33px;color:#111;letter-spacing:-0.27px;left:39.1px;">03.02.2019</span>
<span id="t167" style="top:509.84px;font-size:13.33px;color:#111;letter-spacing:-0.27px;left:119.8px;">Серый</span>
<span id="t168" style="top:509.84px;font-size:13.33px;color:#111;letter-spacing:-0.27px;left:233.9px;">Черный шоколад</span>
<span id="t169" style="top:509.84px;font-size:13.33px;color:#111;letter-spacing:-0.27px;right:750.03px;">155</span>
<span id="t170" style="top:509.84px;font-size:13.33px;color:#111;letter-spacing:-0.27px;right:681.63px;">17050</span>
<span id="t171" style="top:509.84px;font-size:13.33px;color:#111;letter-spacing:-0.27px;left:500.5px;width:200px;text-align:center;">Да</span>
<span id="t172" style="top:530.84px;font-size:13.33px;color:#111;letter-spacing:-0.27px;left:39.1px;">04.02.2019</span>
<span id="t173" style="top:530.84px;font-size:13.33px;color:#111;letter-spacing:-0.27px;left:119.8px;">Голубой</span>
<span id="t174" style="top:530.84px;font-size:13.33px;color:#111;letter-spacing:-0.27px;left:233.9px;">Шоколад с орехами</span>
<span id="t175" style="top:530.84px;font-size:13.33px;color:#111;letter-spacing:-0.27px;right:750.03px;">23</span>
<span id="t176" style="top:530.84px;font-size:13.33px;color:#111;letter-spacing:-0.27px;right:681.63px;">3450</span>
<span id="t177" style="top:530.84px;font-size:13.33px;color:#111;letter-spacing:-0.27px;left:500.5px;width:200px;text-align:center;">Нет</span>
<span id="t178" style="top:551.84px;font-size:13.33px;color:#111;letter-spacing:-0.27px;left:39.1px;">05.02.2019</span>
<span id="t179" style="top:551.84px;font-size:13.33px;color:#111;letter-spacing:-0.27px;left:119.8px;">Коричневый</span>
<span id="t180" style="top:551.84px;font-size:13.33px;color:#111;letter-spacing:-0.27px;left:233.9px;">Черный шоколад</span>
<span id="t181" style="top:551.84px;font-size:13.33px;color:#111;letter-spacing:-0.27px;right:750.03px;">144</span>
<span id="t182" style="top:551.84px;font-size:13.33px;color:#111;letter-spacing:-0.27px;right:681.63px;">15840</span>
<span id="t183" style="top:551.84px;font-size:13.33px;color:#111;letter-spacing:-0.27px;left:500.5px;width:200px;text-align:center;">Нет</span>
<span id="t184" style="top:572.84px;font-size:13.33px;color:#111;letter-spacing:-0.27px;left:39.1px;">06.02.2019</span>
<span id="t185" style="top:572.84px;font-size:13.33px;color:#111;letter-spacing:-0.27px;left:119.8px;">Белый</span>
<span id="t186" style="top:572.84px;font-size:13.33px;color:#111;letter-spacing:-0.27px;left:233.9px;">Молочный шоколад</span>
<span id="t187" style="top:572.84px;font-size:13.33px;color:#111;letter-spacing:-0.27px;right:750.03px;">25</span>
<span id="t188" style="top:572.84px;font-size:13.33px;color:#111;letter-spacing:-0.27px;right:681.63px;">2250</span>
<span id="t189" style="top:572.84px;font-size:13.33px;color:#111;letter-spacing:-0.27px;left:500.5px;width:200px;text-align:center;">Да</span>
<span id="t190" style="top:593.84px;font-size:13.33px;color:#111;letter-spacing:-0.27px;left:39.1px;">07.02.2019</span>
<span id="t191" style="top:593.84px;font-size:13.33px;color:#111;letter-spacing:-0.27px;left:119.8px;">Зелёный</span>
<span id="t192" style="top:593.84px;font-size:13.33px;color:#111;letter-spacing:-0.27px;left:233.9px;">Шоколад с орехами</span>
<span id="t193" style="top:593.84px;font-size:13.33px;color:#111;letter-spacing:-0.27px;right:750.03px;">48</span>
<span id="t194" style="top:593.84px;font-size:13.33px;color:#111;letter-spacing:-0.27px;right:681.63px;">7200</span>
<span id="t195" style="top:593.84px;font-size:13.33px;color:#111;letter-spacing:-0.27px;left:500.5px;width:200px;text-align:center;">Да</span>
<span id="t196" style="top:614.84px;font-size:13.33px;color:#111;letter-spacing:-0.27px;left:39.1px;">08.02.2019</span>
<span id="t197" style="top:614.84px;font-size:13.33px;color:#111;letter-spacing:-0.27px;left:119.8px;">Желтый</span>
<span id="t198" style="top:614.84px;font-size:13.33px;color:#111;letter-spacing:-0.27px;left:233.9px;">Черный шоколад</span>
<span id="t199" style="top:614.84px;font-size:13.33px;color:#111;letter-spacing:-0.27px;right:750.03px;">75</span>
<span id="t200" style="top:614.84px;font-size:13.33px;color:#111;letter-spacing:-0.27px;right:681.63px;">8250</span>
<span id="t201" style="top:614.84px;font-size:13.33px;color:#111;letter-spacing:-0.27px;left:500.5px;width:200px;text-align:center;">Да</span>
<div style="left:397px;top:209px;width:94px;height:2px;background:#217346;"></div>
<div style="left:397px;top:209px;width:2px;height:423px;background:#217346;"></div>
<div style="left:489px;top:209px;width:2px;height:418px;background:#217346;"></div>
<div style="left:397px;top:630px;width:89px;height:2px;background:#217346;"></div>
<div style="left:486px;top:627px;width:6px;height:5px;background:#fff;"></div>
<div style="left:487px;top:628px;width:5px;height:4px;background:#217346;"></div>
<div style="left:645px;top:107px;width:346px;height:298.5px;background:#fff;box-sizing:border-box;border:1px solid #c6c6c6;box-shadow:1px 2px 5px rgba(0,0,0,.28);"></div>
<div style="left:646px;top:108px;width:344px;height:43.5px;background:#c6c6c6;"></div>
<span id="t202" style="top:126.44px;font-size:12px;color:#1e1e1e;font-weight:700;letter-spacing:-0.06px;left:690.9px;">П<u>р</u>авила выделения ячеек</span>
<span id="t203" style="top:170.24px;font-size:12px;color:#444;font-weight:700;letter-spacing:-0.143px;left:690.9px;"><u>П</u>равила отбора первых и последних значений</span>
<span id="t204" style="top:215.54px;font-size:12px;color:#444;font-weight:700;letter-spacing:-0.202px;left:690.9px;"><u>Г</u>истограммы</span>
<span id="t205" style="top:259.54px;font-size:12px;color:#444;font-weight:700;letter-spacing:-0.026px;left:690.9px;">Цветовые <u>ш</u>калы</span>
<span id="t206" style="top:303.74px;font-size:12px;color:#444;font-weight:700;letter-spacing:-0.144px;left:690.9px;"><u>Н</u>аборы значков</span>
<svg style="left:977.5px;top:125.5px;" width="4" height="7" viewBox="0 0 4 7"><path d="M0 0L4 3.5L0 7z" fill="#6a6a6a"/></svg>
<svg style="left:977.5px;top:169.5px;" width="4" height="7" viewBox="0 0 4 7"><path d="M0 0L4 3.5L0 7z" fill="#6a6a6a"/></svg>
<svg style="left:977.5px;top:215.5px;" width="4" height="7" viewBox="0 0 4 7"><path d="M0 0L4 3.5L0 7z" fill="#6a6a6a"/></svg>
<svg style="left:977.5px;top:259.5px;" width="4" height="7" viewBox="0 0 4 7"><path d="M0 0L4 3.5L0 7z" fill="#6a6a6a"/></svg>
<svg style="left:977.5px;top:303.8px;" width="4" height="7" viewBox="0 0 4 7"><path d="M0 0L4 3.5L0 7z" fill="#6a6a6a"/></svg>
<svg style="left:977.5px;top:363.8px;" width="4" height="7" viewBox="0 0 4 7"><path d="M0 0L4 3.5L0 7z" fill="#6a6a6a"/></svg>
<div style="left:690px;top:196px;width:300px;height:1px;background:#e1e1e1;"></div>
<div style="left:646px;top:330px;width:344px;height:1px;background:#e1e1e1;"></div>
<span id="t207" style="top:336.54px;font-size:12px;color:#444;letter-spacing:-0.183px;left:678.1px;"><u>С</u>оздать правило...</span>
<span id="t208" style="top:360.54px;font-size:12px;color:#444;letter-spacing:-0.183px;left:678.1px;"><u>У</u>далить правила</span>
<span id="t209" style="top:384.54px;font-size:12px;color:#444;letter-spacing:-0.07px;left:678.1px;">Управлен<u>и</u>е правилами...</span>
<svg style="left:654px;top:116px;" width="28" height="24.5" viewBox="0 0 28 24.5"><rect x="0.5" y="0.5" width="27" height="23.5" fill="#fff" stroke="none"/><rect x="7" y="6.12" width="14" height="6.12" fill="#ebb96a"/><path d="M7.5 0V24.5" stroke="#c9cfcb" stroke-width="1"/><path d="M21.5 0V24.5" stroke="#c9cfcb" stroke-width="1"/><path d="M0 6.5H28" stroke="#c9cfcb" stroke-width="1"/><path d="M0 12.5H28" stroke="#c9cfcb" stroke-width="1"/><path d="M0 18.5H28" stroke="#c9cfcb" stroke-width="1"/><rect x="0.5" y="0.5" width="27" height="23.5" fill="none" stroke="#7f8c84" stroke-width="1"/></svg>
<svg style="left:668px;top:133px;" width="16" height="12.5" viewBox="0 0 16 12.5"><rect x="0.5" y="0.5" width="15" height="11.5" fill="#fff" stroke="#7f8c84" stroke-width="1"/></svg>
<span id="t210" style="top:132.64px;font-size:11px;color:#333;left:669.8px;">≤</span>
<span id="t211" style="top:135.55px;font-size:10px;color:#333;left:676.3px;">&gt;</span>
<svg style="left:654px;top:160px;" width="28" height="24.5" viewBox="0 0 28 24.5"><rect x="0.5" y="0.5" width="27" height="23.5" fill="#fff" stroke="none"/><rect x="7" y="0.00" width="14" height="6.12" fill="#ebb96a"/><rect x="7" y="6.12" width="14" height="6.12" fill="#ebb96a"/><rect x="7" y="12.25" width="14" height="6.12" fill="#ebb96a"/><path d="M7.5 0V24.5" stroke="#c9cfcb" stroke-width="1"/><path d="M21.5 0V24.5" stroke="#c9cfcb" stroke-width="1"/><path d="M0 6.5H28" stroke="#c9cfcb" stroke-width="1"/><path d="M0 12.5H28" stroke="#c9cfcb" stroke-width="1"/><path d="M0 18.5H28" stroke="#c9cfcb" stroke-width="1"/><rect x="0.5" y="0.5" width="27" height="23.5" fill="none" stroke="#7f8c84" stroke-width="1"/><path d="M14.500 15.500V3.500M10.500 7.500L14.500 3.200L18.500 7.500" fill="none" stroke="#555" stroke-width="1.200"/></svg>
<svg style="left:668px;top:177px;" width="16" height="12.5" viewBox="0 0 16 12.5"><rect x="0.5" y="0.5" width="15" height="11.5" fill="#fff" stroke="#7f8c84" stroke-width="1"/></svg>
<span id="t212" style="top:178.04px;font-size:10.5px;color:#333;letter-spacing:0.45px;font-family:'Liberation Serif',serif;left:670.1px;">10</span>
<svg style="left:654px;top:207px;" width="28" height="25.5" viewBox="0 0 28 25.5"><rect x="0.5" y="0.5" width="27" height="24.5" fill="#fff" stroke="none"/><rect x="7" y="0.0" width="9" height="5.1" fill="#4a7ebb"/><rect x="17" y="2.0" width="3" height="1" fill="#555"/><rect x="7" y="5.1" width="3" height="5.1" fill="#4a7ebb"/><rect x="17" y="7.1" width="3" height="1" fill="#555"/><rect x="7" y="10.2" width="6" height="5.1" fill="#4a7ebb"/><rect x="17" y="12.2" width="3" height="1" fill="#555"/><rect x="7" y="15.3" width="8" height="5.1" fill="#4a7ebb"/><rect x="17" y="17.3" width="3" height="1" fill="#555"/><rect x="7" y="20.4" width="6" height="5.1" fill="#4a7ebb"/><rect x="17" y="22.4" width="3" height="1" fill="#555"/><path d="M7.5 0V25.5" stroke="#c9cfcb" stroke-width="1"/><path d="M21.5 0V25.5" stroke="#c9cfcb" stroke-width="1"/><path d="M0 5.5H28" stroke="#c9cfcb" stroke-width="1"/><path d="M0 10.5H28" stroke="#c9cfcb" stroke-width="1"/><path d="M0 15.5H28" stroke="#c9cfcb" stroke-width="1"/><path d="M0 20.5H28" stroke="#c9cfcb" stroke-width="1"/><rect x="0.5" y="0.5" width="27" height="24.5" fill="none" stroke="#7f8c84" stroke-width="1"/></svg>
<svg style="left:654px;top:251px;" width="28" height="25.5" viewBox="0 0 28 25.5"><rect x="0.5" y="0.5" width="27" height="24.5" fill="#fff" stroke="none"/><rect x="7" y="0.0" width="14" height="5.1" fill="#4a7ebb"/><rect x="14" y="2.0" width="6" height="1" fill="#555"/><rect x="7" y="5.1" width="14" height="5.1" fill="#bdbdbd"/><rect x="14" y="7.1" width="6" height="1" fill="#555"/><rect x="7" y="10.2" width="14" height="5.1" fill="#ebc088"/><rect x="14" y="12.2" width="6" height="1" fill="#555"/><rect x="7" y="15.3" width="14" height="5.1" fill="#ebc088"/><rect x="14" y="17.3" width="6" height="1" fill="#555"/><rect x="7" y="20.4" width="14" height="5.1" fill="#b9570f"/><rect x="14" y="22.4" width="6" height="1" fill="#555"/><path d="M7.5 0V25.5" stroke="#c9cfcb" stroke-width="1"/><path d="M21.5 0V25.5" stroke="#c9cfcb" stroke-width="1"/><path d="M0 5.5H28" stroke="#c9cfcb" stroke-width="1"/><path d="M0 10.5H28" stroke="#c9cfcb" stroke-width="1"/><path d="M0 15.5H28" stroke="#c9cfcb" stroke-width="1"/><path d="M0 20.5H28" stroke="#c9cfcb" stroke-width="1"/><rect x="0.5" y="0.5" width="27" height="24.5" fill="none" stroke="#7f8c84" stroke-width="1"/></svg>
<svg style="left:654px;top:295px;" width="28" height="25.5" viewBox="0 0 28 25.5"><rect x="0.5" y="0.5" width="27" height="24.5" fill="#fff" stroke="none"/><circle cx="10" cy="2.6" r="1.2" fill="#777"/><rect x="14" y="2.0" width="6" height="1" fill="#666"/><circle cx="10" cy="7.7" r="1.2" fill="#b9570f"/><rect x="14" y="7.1" width="6" height="1" fill="#666"/><circle cx="10" cy="12.8" r="1.2" fill="#777"/><rect x="14" y="12.2" width="6" height="1" fill="#666"/><circle cx="10" cy="17.9" r="1.2" fill="#b9570f"/><rect x="14" y="17.3" width="6" height="1" fill="#666"/><circle cx="10" cy="23.0" r="1.2" fill="#777"/><rect x="14" y="22.4" width="6" height="1" fill="#666"/><path d="M7.5 0V25.5" stroke="#c9cfcb" stroke-width="1"/><path d="M21.5 0V25.5" stroke="#c9cfcb" stroke-width="1"/><path d="M0 5.5H28" stroke="#c9cfcb" stroke-width="1"/><path d="M0 10.5H28" stroke="#c9cfcb" stroke-width="1"/><path d="M0 15.5H28" stroke="#c9cfcb" stroke-width="1"/><path d="M0 20.5H28" stroke="#c9cfcb" stroke-width="1"/><rect x="0.5" y="0.5" width="27" height="24.5" fill="none" stroke="#7f8c84" stroke-width="1"/></svg>
<svg style="left:651px;top:337px;" width="15" height="16" viewBox="0 0 15 16"><rect x="0.500" y="0.500" width="12" height="12" fill="#fff" stroke="#7f8c84"/><path d="M3.500 1V12M9.500 1V12M1 3.500H12M1 9.500H12" stroke="#b9c0bb" stroke-dasharray="2 1"/><rect x="3.500" y="3" width="6" height="6.500" fill="#ebb96a"/></svg>
<svg style="left:651px;top:361px;" width="15" height="16" viewBox="0 0 15 16"><rect x="0.500" y="0.500" width="12" height="12" fill="#fff" stroke="#7f8c84"/><path d="M3.500 1V12M9.500 1V12M1 3.500H12M1 9.500H12" stroke="#b9c0bb" stroke-dasharray="2 1"/><rect x="3.500" y="3" width="6" height="6.500" fill="#ebb96a"/><path d="M5 15L12 8L15 11L9 16z" fill="#e7ad5c"/><path d="M0 13.5H4" stroke="#fff" stroke-width="2"/></svg>
<svg style="left:650px;top:384px;" width="3" height="15" viewBox="0 0 3 15"><path d="M0.5 14V0.5H14" fill="none" stroke="#7f8c84"/></svg>
<svg style="left:652px;top:386px;" width="15" height="16" viewBox="0 0 15 16"><rect x="0.500" y="0.500" width="12" height="12" fill="#fff" stroke="#7f8c84"/><path d="M3.500 1V12M9.500 1V12M1 3.500H12M1 9.500H12" stroke="#b9c0bb" stroke-dasharray="2 1"/><rect x="3.500" y="3" width="6" height="6.500" fill="#ebb96a"/></svg>
<div style="left:991px;top:108px;width:237px;height:337px;background:#fff;box-sizing:border-box;border:1px solid #c6c6c6;box-shadow:1px 2px 5px rgba(0,0,0,.28);"></div>
<div style="left:992px;top:154px;width:235px;height:43.5px;background:#c6c6c6;"></div>
<span id="t213" style="top:128.44px;font-size:12px;color:#444;font-weight:700;letter-spacing:-0.194px;left:1036.9px;"><u>Б</u>ольше...</span>
<span id="t214" style="top:172.34px;font-size:12px;color:#1e1e1e;font-weight:700;letter-spacing:0.056px;left:1036.9px;">Мень<u>ш</u>е...</span>
<span id="t215" style="top:216.44px;font-size:12px;color:#444;font-weight:700;letter-spacing:0.247px;left:1036.9px;"><u>М</u>ежду...</span>
<span id="t216" style="top:260.44px;font-size:12px;color:#444;font-weight:700;letter-spacing:-0.388px;left:1036.9px;"><u>Р</u>авно...</span>
<span id="t217" style="top:304.44px;font-size:12px;color:#444;font-weight:700;letter-spacing:0.025px;left:1036.9px;"><u>Т</u>екст содержит...</span>
<span id="t218" style="top:348.44px;font-size:12px;color:#444;font-weight:700;letter-spacing:-0.316px;left:1036.9px;">Д<u>а</u>та...</span>
<span id="t219" style="top:392.44px;font-size:12px;color:#444;font-weight:700;letter-spacing:0.011px;left:1036.9px;"><u>П</u>овторяющиеся значения...</span>
<div style="left:992px;top:418px;width:235px;height:1px;background:#e1e1e1;"></div>
<span id="t220" style="top:424.54px;font-size:12px;color:#444;letter-spacing:-0.01px;left:1023.3px;">Дру<u>г</u>ие правила...</span>
<svg style="left:1000px;top:120px;" width="28" height="24" viewBox="0 0 28 24"><rect x="0.5" y="0.5" width="27" height="23" fill="#fff" stroke="none"/><rect x="8" y="6.00" width="13" height="6.00" fill="#ebb96a"/><path d="M8.5 0V24" stroke="#c9cfcb" stroke-width="1"/><path d="M21.5 0V24" stroke="#c9cfcb" stroke-width="1"/><path d="M0 6.5H28" stroke="#c9cfcb" stroke-width="1"/><path d="M0 12.5H28" stroke="#c9cfcb" stroke-width="1"/><path d="M0 18.5H28" stroke="#c9cfcb" stroke-width="1"/><rect x="0.5" y="0.5" width="27" height="23" fill="none" stroke="#7f8c84" stroke-width="1"/></svg>
<svg style="left:1014px;top:136px;" width="16" height="12.5" viewBox="0 0 16 12.5"><rect x="0.5" y="0.5" width="15" height="11.5" fill="#fff" stroke="#7f8c84" stroke-width="1"/></svg>
<span id="t221" style="top:135.74px;font-size:12px;color:#333;left:1018.1px;">&gt;</span>
<svg style="left:1000px;top:164px;" width="28" height="24" viewBox="0 0 28 24"><rect x="0.5" y="0.5" width="27" height="23" fill="#fff" stroke="none"/><rect x="8" y="6.00" width="13" height="6.00" fill="#ebb96a"/><path d="M8.5 0V24" stroke="#c9cfcb" stroke-width="1"/><path d="M21.5 0V24" stroke="#c9cfcb" stroke-width="1"/><path d="M0 6.5H28" stroke="#c9cfcb" stroke-width="1"/><path d="M0 12.5H28" stroke="#c9cfcb" stroke-width="1"/><path d="M0 18.5H28" stroke="#c9cfcb" stroke-width="1"/><rect x="0.5" y="0.5" width="27" height="23" fill="none" stroke="#7f8c84" stroke-width="1"/></svg>
<svg style="left:1014px;top:180px;" width="16" height="12.5" viewBox="0 0 16 12.5"><rect x="0.5" y="0.5" width="15" height="11.5" fill="#fff" stroke="#7f8c84" stroke-width="1"/></svg>
<span id="t222" style="top:179.74px;font-size:12px;color:#333;left:1017.9px;">&lt;</span>
<svg style="left:1000px;top:207px;" width="28" height="24" viewBox="0 0 28 24"><rect x="0.5" y="0.5" width="27" height="23" fill="#fff" stroke="none"/><rect x="0" y="6.00" width="8" height="6.00" fill="#4a7ebb"/><rect x="21" y="6.00" width="7" height="6.00" fill="#4a7ebb"/><rect x="8" y="12.00" width="13" height="6.00" fill="#ebb96a"/><path d="M8.5 0V24" stroke="#c9cfcb" stroke-width="1"/><path d="M21.5 0V24" stroke="#c9cfcb" stroke-width="1"/><path d="M0 6.5H28" stroke="#c9cfcb" stroke-width="1"/><path d="M0 12.5H28" stroke="#c9cfcb" stroke-width="1"/><path d="M0 18.5H28" stroke="#c9cfcb" stroke-width="1"/><rect x="0.5" y="0.5" width="27" height="23" fill="none" stroke="#7f8c84" stroke-width="1"/></svg>
<svg style="left:1000px;top:251px;" width="28" height="24" viewBox="0 0 28 24"><rect x="0.5" y="0.5" width="27" height="23" fill="#fff" stroke="none"/><rect x="8" y="6.00" width="13" height="6.00" fill="#ebb96a"/><path d="M8.5 0V24" stroke="#c9cfcb" stroke-width="1"/><path d="M21.5 0V24" stroke="#c9cfcb" stroke-width="1"/><path d="M0 6.5H28" stroke="#c9cfcb" stroke-width="1"/><path d="M0 12.5H28" stroke="#c9cfcb" stroke-width="1"/><path d="M0 18.5H28" stroke="#c9cfcb" stroke-width="1"/><rect x="0.5" y="0.5" width="27" height="23" fill="none" stroke="#7f8c84" stroke-width="1"/></svg>
<svg style="left:1014px;top:267px;" width="16" height="12.5" viewBox="0 0 16 12.5"><rect x="0.5" y="0.5" width="15" height="11.5" fill="#fff" stroke="#7f8c84" stroke-width="1"/><path d="M4 4.500H12M4 8.500H12" stroke="#333"/></svg>
<svg style="left:1000px;top:295px;" width="28" height="24" viewBox="0 0 28 24"><rect x="0.5" y="0.5" width="27" height="23" fill="#fff" stroke="none"/><rect x="8" y="6.00" width="13" height="6.00" fill="#ebb96a"/><path d="M8.5 0V24" stroke="#c9cfcb" stroke-width="1"/><path d="M21.5 0V24" stroke="#c9cfcb" stroke-width="1"/><path d="M0 6.5H28" stroke="#c9cfcb" stroke-width="1"/><path d="M0 12.5H28" stroke="#c9cfcb" stroke-width="1"/><path d="M0 18.5H28" stroke="#c9cfcb" stroke-width="1"/><rect x="0.5" y="0.5" width="27" height="23" fill="none" stroke="#7f8c84" stroke-width="1"/></svg>
<svg style="left:1014px;top:311px;" width="17" height="12.5" viewBox="0 0 17 12.5"><rect x="0.5" y="0.5" width="16" height="11.5" fill="#fff" stroke="#7f8c84" stroke-width="1"/></svg>
<span id="t223" style="top:311.84px;font-size:10.5px;color:#333;letter-spacing:0.939px;font-family:'Liberation Serif',serif;left:1015.9px;">ab</span>
<svg style="left:1000px;top:339.5px;" width="28" height="25" viewBox="0 0 28 25"><rect x="0.5" y="0.5" width="27" height="24" fill="#fff" stroke="none"/><rect x="6" y="9.500" width="15" height="5.500" fill="#ebb96a"/><path d="M8.5 0V25" stroke="#c9cfcb" stroke-width="1"/><path d="M21.5 0V25" stroke="#c9cfcb" stroke-width="1"/><path d="M0 5.5H28" stroke="#c9cfcb" stroke-width="1"/><path d="M0 10.5H28" stroke="#c9cfcb" stroke-width="1"/><path d="M0 15.5H28" stroke="#c9cfcb" stroke-width="1"/><path d="M0 20.5H28" stroke="#c9cfcb" stroke-width="1"/><rect x="0.5" y="0.5" width="27" height="24" fill="none" stroke="#7f8c84" stroke-width="1"/></svg>
<svg style="left:1014px;top:352px;" width="17" height="15.5" viewBox="0 0 17 15.5"><rect x="0.5" y="0.5" width="16" height="14.5" fill="#fff" stroke="#7f8c84"/><rect x="0" y="0" width="17" height="3.5" fill="#666"/><path d="M4.5 4V15M8.5 4V15M12.5 4V15M0 7.5H17M0 11.5H17" stroke="#c9cfcb"/><rect x="9" y="6" width="5" height="5" fill="#b9570f"/><rect x="10.5" y="7.5" width="2" height="2" fill="#f3d5a8"/></svg>
<svg style="left:1000px;top:383.5px;" width="28" height="24" viewBox="0 0 28 24"><rect x="0.5" y="0.5" width="27" height="23" fill="#fff" stroke="none"/><rect x="8" y="6.00" width="13" height="6.00" fill="#ebb96a"/><rect x="8" y="18.00" width="13" height="6.00" fill="#ebb96a"/><rect x="11" y="2.5" width="7" height="1" fill="#888"/><rect x="11" y="8.5" width="7" height="1" fill="#888"/><rect x="11" y="14.5" width="7" height="1" fill="#888"/><rect x="11" y="20.5" width="7" height="1" fill="#888"/><path d="M8.5 0V24" stroke="#c9cfcb" stroke-width="1"/><path d="M21.5 0V24" stroke="#c9cfcb" stroke-width="1"/><path d="M0 6.5H28" stroke="#c9cfcb" stroke-width="1"/><path d="M0 12.5H28" stroke="#c9cfcb" stroke-width="1"/><path d="M0 18.5H28" stroke="#c9cfcb" stroke-width="1"/><rect x="0.5" y="0.5" width="27" height="23" fill="none" stroke="#7f8c84" stroke-width="1"/></svg>
<div style="left:645px;top:52px;width:27px;height:27px;border-radius:50%;background:#fff;box-shadow:0.500px 1px 4px 1.500px rgba(45,50,48,.62);"></div>
<div style="left:647.5px;top:54.5px;width:22px;height:22px;border-radius:50%;background:#4393d9;"></div>
<span id="t224" style="top:56.55px;font-size:16px;color:#fff;font-family:'DejaVu Sans Light','DejaVu Sans',sans-serif;font-weight:200;left:558.5px;width:200px;text-align:center;">1</span>
<div style="left:888.5px;top:118.3px;width:27px;height:27px;border-radius:50%;background:#fff;box-shadow:0.500px 1px 4px 1.500px rgba(45,50,48,.62);"></div>
<div style="left:891px;top:120.8px;width:22px;height:22px;border-radius:50%;background:#4393d9;"></div>
<span id="t225" style="top:122.85px;font-size:16px;color:#fff;font-family:'DejaVu Sans Light','DejaVu Sans',sans-serif;font-weight:200;left:802px;width:200px;text-align:center;">2</span>
<div style="left:1147.1px;top:160.4px;width:27px;height:27px;border-radius:50%;background:#fff;box-shadow:0.500px 1px 4px 1.500px rgba(45,50,48,.62);"></div>
<div style="left:1149.6px;top:162.9px;width:22px;height:22px;border-radius:50%;background:#4393d9;"></div>
<span id="t226" style="top:164.95px;font-size:16px;color:#fff;font-family:'DejaVu Sans Light','DejaVu Sans',sans-serif;font-weight:200;left:1060.6px;width:200px;text-align:center;">3</span>
<svg style="left:19px;top:42px;" width="30" height="31" viewBox="0 0 30 31"><rect x="1" y="3" width="24" height="25" fill="#dadada"/><path d="M6.5 7V3.5H10V1.5Q13 -0.8 16 1.5V3.500H19.500V7z" fill="#b4b4b4"/><rect x="12" y="2" width="2" height="2" fill="#f3f3f3"/><path d="M15.500 11.500H24L28.500 16V29.500H15.500z" fill="#f7f7f7" stroke="#bcbcbc"/><path d="M24 11.500V16H28.500" fill="none" stroke="#bcbcbc"/></svg>
<svg style="left:62px;top:40px;" width="16" height="16" viewBox="0 0 16 16"><path d="M3 0.500L11.500 10.500M13 0.500L4.500 10.500" stroke="#505050" stroke-width="1.700" fill="none"/><circle cx="4" cy="12.200" r="2.500" fill="none" stroke="#3b82d0" stroke-width="1.300"/><circle cx="12" cy="12.200" r="2.500" fill="none" stroke="#3b82d0" stroke-width="1.300"/></svg>
<svg style="left:62px;top:64px;" width="16" height="14" viewBox="0 0 16 14"><path d="M0.500 0.500H6.500L9.500 3.500V10.500H0.500z" fill="#fff" stroke="#555"/><path d="M2.500 4.500H6M2.500 6.500H5" stroke="#3b7fce"/><path d="M6.500 3.500H11.500L14.500 6.500V13.500H6.500z" fill="#fff" stroke="#555"/><path d="M8.500 8.500H12.500M8.500 10.500H12.500" stroke="#3b7fce"/></svg>
<svg style="left:62px;top:86px;" width="17" height="15" viewBox="0 0 17 15"><path d="M0.500 8L8 4.500L12 9.500L6.500 14.500z" fill="#e8b25f"/><path d="M7.500 4.500L10.500 2L14 6L11.500 9z" fill="#5a5a5a"/><path d="M11.500 3L14.500 0.500L16.500 2.500L13.500 5.500z" fill="#5a5a5a"/></svg>
<svg style="left:201px;top:80px;" width="13" height="14" viewBox="0 0 13 14"><rect x="0" y="0" width="1" height="1" fill="#6a6a6a"/><rect x="2" y="0" width="1" height="1" fill="#6a6a6a"/><rect x="4" y="0" width="1" height="1" fill="#6a6a6a"/><rect x="6" y="0" width="1" height="1" fill="#6a6a6a"/><rect x="8" y="0" width="1" height="1" fill="#6a6a6a"/><rect x="10" y="0" width="1" height="1" fill="#6a6a6a"/><rect x="12" y="0" width="1" height="1" fill="#6a6a6a"/><rect x="0" y="2" width="1" height="1" fill="#6a6a6a"/><rect x="6" y="2" width="1" height="1" fill="#6a6a6a"/><rect x="12" y="2" width="1" height="1" fill="#6a6a6a"/><rect x="0" y="4" width="1" height="1" fill="#6a6a6a"/><rect x="6" y="4" width="1" height="1" fill="#6a6a6a"/><rect x="12" y="4" width="1" height="1" fill="#6a6a6a"/><rect x="0" y="6" width="1" height="1" fill="#6a6a6a"/><rect x="2" y="6" width="1" height="1" fill="#6a6a6a"/><rect x="4" y="6" width="1" height="1" fill="#6a6a6a"/><rect x="6" y="6" width="1" height="1" fill="#6a6a6a"/><rect x="8" y="6" width="1" height="1" fill="#6a6a6a"/><rect x="10" y="6" width="1" height="1" fill="#6a6a6a"/><rect x="12" y="6" width="1" height="1" fill="#6a6a6a"/><rect x="0" y="8" width="1" height="1" fill="#6a6a6a"/><rect x="6" y="8" width="1" height="1" fill="#6a6a6a"/><rect x="12" y="8" width="1" height="1" fill="#6a6a6a"/><rect x="0" y="10" width="1" height="1" fill="#6a6a6a"/><rect x="6" y="10" width="1" height="1" fill="#6a6a6a"/><rect x="12" y="10" width="1" height="1" fill="#6a6a6a"/><rect x="0" y="12" width="13" height="1.200" fill="#555"/></svg>
<svg style="left:243px;top:78px;" width="17" height="14" viewBox="0 0 17 14"><path d="M8 2.500L14 8.500L8 13L2 8.500z" fill="#fff" stroke="#5d6b63" stroke-width="1"/><path d="M6 7V2.200Q6 0.800 7.300 0.800Q8.600 0.800 8.600 2.200V6.500" fill="none" stroke="#555" stroke-width="1"/><path d="M13 4.500Q16.500 7 15.500 11.500Q14 12 13 11.500L14.800 8.500z" fill="#3b7fce"/></svg>
<span style="left:394.5px;top:46.5px;font-size:10.5px;color:#4a4a4a;transform:rotate(-45deg);transform-origin:50% 50%;-webkit-text-stroke:0.15px #555;">ab</span>
<svg style="left:401px;top:52px;" width="12" height="12" viewBox="0 0 12 12"><path d="M1.500 10.500L10.500 1.500M7 1.500H10.500V5" fill="none" stroke="#5a5a5a" stroke-width="0.950"/></svg>
<span id="t227" style="top:45.90px;font-size:10.5px;color:#4a4a4a;left:450.8px;-webkit-text-stroke:0.15px #555;">ab</span>
<span id="t228" style="top:53.50px;font-size:10.5px;color:#4a4a4a;left:450.8px;-webkit-text-stroke:0.15px #555;">c</span>
<svg style="left:457.5px;top:57.5px;" width="6" height="5" viewBox="0 0 6 5"><path d="M5 0V3H1M2.800 1.200L1 3L2.800 4.800" fill="none" stroke="#3b7fce" stroke-width="1.100"/></svg>
<svg style="left:449px;top:79px;" width="15" height="15" viewBox="0 0 15 15"><rect x="0.600" y="0.600" width="13.800" height="13.800" fill="#fff" stroke="#666" stroke-width="1.200"/><path d="M0.600 3.700H14.400M0.600 11.200H14.400M7.500 0.600V3.700M7.500 11.200V14.400" stroke="#666" stroke-width="1.100" fill="none"/><path d="M2.500 7.500H12.500M4.300 5.800L2.500 7.500L4.300 9.200M10.700 5.800L12.500 7.500L10.700 9.200" stroke="#3b7fce" stroke-width="1" fill="none"/></svg>
<svg style="left:500px;top:79px;" width="17" height="17" viewBox="0 0 17 17"><rect x="1" y="1" width="14" height="7.500" fill="#fff" stroke="#3b7fce" stroke-width="2"/><circle cx="8" cy="4.700" r="2.200" fill="#3b7fce"/><rect x="8" y="4.700" width="3" height="2.500" fill="#fff"/><path d="M9 6.500H16V12.500H9z" fill="#e8b25f"/><path d="M9 8.500H16M9 10.500H16" stroke="#f6dcae" stroke-width="0.800"/><path d="M4 11.200H11V16H4z" fill="#e8b25f"/><path d="M4 12.800H11M4 14.500H11" stroke="#f6dcae" stroke-width="0.800"/></svg>
<svg style="left:587px;top:81.5px;" width="7" height="5" viewBox="0 0 7 5"><path d="M6.500 2.500H1M3.200 0.300L1 2.500L3.200 4.700" fill="none" stroke="#3b7fce" stroke-width="1.200"/></svg>
<span id="t229" style="top:78.48px;font-size:8.2px;color:#4a4a4a;letter-spacing:-0.4px;left:596.1px;-webkit-text-stroke:0.15px #555;">0</span>
<span id="t230" style="top:85.68px;font-size:8.2px;color:#4a4a4a;letter-spacing:-0.4px;left:588.9px;-webkit-text-stroke:0.15px #555;">,00</span>
<span id="t231" style="top:78.48px;font-size:8.2px;color:#4a4a4a;letter-spacing:-0.4px;left:612.3px;-webkit-text-stroke:0.15px #555;">,00</span>
<svg style="left:609.2px;top:88.3px;" width="7" height="5" viewBox="0 0 7 5"><path d="M0.500 2.500H6M3.800 0.300L6 2.500L3.800 4.700" fill="none" stroke="#3b7fce" stroke-width="1.200"/></svg>
<span id="t232" style="top:85.68px;font-size:8.2px;color:#4a4a4a;letter-spacing:-0.4px;left:615.9px;-webkit-text-stroke:0.15px #555;">,0</span>
<svg style="left:1073px;top:10px;" width="13" height="18" viewBox="0 0 13 18"><path d="M4.300 12.500C4.300 10 1 8.500 1 5.800C1 3 3.300 1 6.500 1C9.700 1 12 3 12 5.800C12 8.500 8.700 10 8.700 12.500z" fill="none" stroke="#fff" stroke-width="1.100"/><path d="M4.300 14.200H8.700M5 16.500H8" stroke="#fff" stroke-width="1.100"/></svg>
<svg style="left:1167px;top:10px;" width="18" height="18" viewBox="0 0 18 18"><circle cx="8.100" cy="5.900" r="4.500" fill="none" stroke="#fff" stroke-width="1.100"/><path d="M1 16.500Q1.500 11.500 5.500 10" fill="none" stroke="#fff" stroke-width="1.100"/><path d="M9 13.300H16M12.500 9.800V16.800" stroke="#fff" stroke-width="1.100"/></svg>
<svg style="left:684px;top:42px;" width="31" height="31" viewBox="0 0 31 31"><rect x="0.500" y="0.500" width="27" height="24" fill="#fff"/><rect x="8" y="1" width="6" height="5.500" fill="#b9570f"/><rect x="8" y="7" width="11" height="5.500" fill="#4a7ebb"/><rect x="8" y="13" width="9" height="5.500" fill="#b9570f"/><rect x="8" y="19" width="4" height="5.500" fill="#4a7ebb"/><rect x="10" y="2.500" width="1" height="1" fill="#f3d5a8"/><rect x="11.500" y="4" width="1" height="1" fill="#f3d5a8"/><rect x="10" y="14.500" width="1" height="1" fill="#f3d5a8"/><rect x="11.500" y="16" width="1" height="1" fill="#f3d5a8"/><path d="M7.500 0V25M20.500 0V25M0 6.500H28M0 12.500H28M0 18.500H28" stroke="#c9cfcb"/><rect x="0.500" y="0.500" width="27" height="24" fill="none" stroke="#7f8c84"/><rect x="13.500" y="16.500" width="17" height="14" fill="#fff" stroke="#fff" stroke-width="1.300"/><rect x="14.500" y="17.500" width="15" height="12" fill="#fff" stroke="#7f8c84"/><path d="M18 22H26M18 25H26M24.500 19.500L19.500 27.500" stroke="#444" stroke-width="1" fill="none"/></svg>
<svg style="left:786px;top:44px;" width="25" height="21" viewBox="0 0 25 21"><rect x="0.500" y="0.500" width="24" height="20" fill="#fff"/><rect x="6.500" y="5.500" width="18" height="15" fill="#bdd7ee"/><path d="M6.500 0V21M12.500 0V21M18.500 0V21M0 5.500H25M0 10.500H25M0 15.500H25" stroke="#b3b3b3"/><rect x="0.500" y="0.500" width="24" height="20" fill="none" stroke="#6f7b73" stroke-width="1.200"/></svg>
<svg style="left:792.6px;top:49px;" width="23" height="23" viewBox="0 0 23 23"><path d="M22 0.500L22.500 6.500L14.500 15L10.500 11.500z" fill="#f3f3f3" stroke="#f3f3f3" stroke-width="2.400"/><path d="M0.500 22L7.500 13.500Q10.500 11.500 12.500 13.800Q14 16.500 11.500 19.500L9 22z" fill="#f3f3f3" stroke="#f3f3f3" stroke-width="2.400"/><path d="M22 0.500L22.500 6.500L14.500 15L10.500 11.500z" fill="#6f7b73"/><path d="M12.300 9.200L16.700 13" stroke="#f3f3f3" stroke-width="1.400"/><path d="M0.500 22L7.500 13.500Q10.500 11.500 12.500 13.800Q14 16.500 11.500 19.500L9 22z" fill="#4a7ebb"/><path d="M8 14.500Q10.500 12.500 12 14.300Q13.300 16.500 11.300 19L9.500 20.500Q8 16.500 8 14.500z" fill="#fff" stroke="#3b82d0" stroke-width="0.900"/></svg>
<svg style="left:854px;top:42px;" width="27" height="23" viewBox="0 0 27 23"><rect x="0.500" y="0.500" width="25.500" height="21.500" fill="#fff"/><rect x="5.500" y="5.500" width="14" height="10" fill="#bdd7ee"/><path d="M5.500 0V22M19.500 0V22M0 5.500H26M0 15.500H26" stroke="#b3b3b3"/><rect x="0.500" y="0.500" width="25.500" height="21.500" fill="none" stroke="#6f7b73" stroke-width="1.200"/></svg>
<svg style="left:860.4px;top:47.2px;" width="23" height="23" viewBox="0 0 23 23"><path d="M22 0.500L22.500 6.500L14.500 15L10.500 11.500z" fill="#f3f3f3" stroke="#f3f3f3" stroke-width="2.400"/><path d="M0.500 22L7.500 13.500Q10.500 11.500 12.500 13.800Q14 16.500 11.500 19.500L9 22z" fill="#f3f3f3" stroke="#f3f3f3" stroke-width="2.400"/><path d="M22 0.500L22.500 6.500L14.500 15L10.500 11.500z" fill="#6f7b73"/><path d="M12.300 9.200L16.700 13" stroke="#f3f3f3" stroke-width="1.400"/><path d="M0.500 22L7.500 13.500Q10.500 11.500 12.500 13.800Q14 16.500 11.500 19.500L9 22z" fill="#4a7ebb"/><path d="M8 14.500Q10.500 12.500 12 14.300Q13.300 16.500 11.300 19L9.500 20.500Q8 16.500 8 14.500z" fill="#fff" stroke="#3b82d0" stroke-width="0.900"/></svg>
<svg style="left:908px;top:40px;" width="16" height="16" viewBox="0 0 16 16"><path d="M0.600 0.600H8.600V3.800H0.600zM4.600 0.600V3.800" fill="#fff" stroke="#666" stroke-width="1.100"/><path d="M0.600 9.600H8.600V15.400H0.600zM4.600 9.600V15.400M0.600 12.500H8.600" fill="#fff" stroke="#666" stroke-width="1.100"/><rect x="7.500" y="5.300" width="8" height="3.200" fill="#bdd7ee" stroke="#666" stroke-width="1"/><path d="M11.500 5.300V8.500" stroke="#666"/><path d="M6 6.900H0.800M3 4.700L0.800 6.900L3 9.100" fill="none" stroke="#3b7fce" stroke-width="1.300"/></svg>
<svg style="left:908px;top:63px;" width="16" height="16" viewBox="0 0 16 16"><path d="M0.600 0.600H8.600V3.800H0.600zM4.600 0.600V3.800" fill="#fff" stroke="#666" stroke-width="1.100"/><path d="M0.600 11.400H8.600V15.400H0.600zM4.600 11.400V15.400" fill="#fff" stroke="#666" stroke-width="1.100"/><rect x="3.500" y="5.300" width="4.500" height="4" fill="#bdd7ee" stroke="#666" stroke-width="1"/><path d="M9.500 4L15.500 9.500M15.500 4.500L9.500 10" stroke="#b9570f" stroke-width="1.300"/></svg>
<svg style="left:908px;top:86px;" width="15" height="16" viewBox="0 0 15 16"><path d="M0.500 0V3M13.500 0V3M1.500 1.500H12.500M3 0.200L1.500 1.500L3 2.800M11 0.200L12.500 1.500L11 2.800" fill="none" stroke="#3b7fce" stroke-width="1"/><rect x="0.600" y="4.600" width="13.300" height="9.300" fill="#fff" stroke="#666" stroke-width="1.100"/><path d="M4.500 4.600V14M9.500 4.600V14M0.600 7.500H14M0.600 10.800H14" stroke="#c4c4c4"/><rect x="3.500" y="6.500" width="5" height="4.500" fill="#4a7ebb"/><path d="M0.600 14V15.300H6.500L7.300 14.500L8 15.300H14V14" fill="none" stroke="#666" stroke-width="0.900"/></svg>
<svg style="left:1014px;top:40px;" width="16" height="16" viewBox="0 0 16 16"><path d="M14.600 3.200V1H1.500L8.300 7.500L1.500 14H14.600V11.800" fill="none" stroke="#444" stroke-width="2"/></svg>
<svg style="left:1015px;top:63px;" width="14" height="16" viewBox="0 0 14 16"><rect x="0.500" y="0.500" width="13" height="15" fill="#fff" stroke="#7f8c84"/><rect x="0" y="0" width="14" height="4" fill="#7f8c84"/><path d="M7 6V13M3.800 9.800L7 13L10.200 9.800" fill="none" stroke="#3b7fce" stroke-width="1.700"/></svg>
<svg style="left:1015px;top:87px;" width="14" height="12" viewBox="0 0 14 12"><path d="M4.300 5.600L10.800 0.800L13.700 4.700L7.200 9.500z" fill="#e8b25f"/><path d="M0.300 8.600L3.300 6.400L6.200 10.300L3.200 12.500z" fill="#e8b25f"/><rect x="8.500" y="4" width="1" height="1" fill="#a86a2a"/><rect x="10.500" y="3.300" width="1" height="1" fill="#a86a2a"/><rect x="9.800" y="5.500" width="1" height="1" fill="#a86a2a"/></svg>
<span id="t233" style="top:40.12px;font-size:16px;color:#3b7fce;font-weight:700;left:1065.5px;transform:scaleX(.96);transform-origin:0 0;">A</span>
<span id="t234" style="top:54.83px;font-size:15px;color:#85645c;left:1067.4px;transform:scaleX(.72);transform-origin:0 0;-webkit-text-stroke:0.300px #85645c;">Я</span>
<svg style="left:1078px;top:50px;" width="18" height="15" viewBox="0 0 18 15"><path d="M0.300 0.500H17.300L10.300 7V14.500H7V7z" fill="#7f8c84"/><path d="M8.100 7.500V13.600H9.200V7.500L12 4.800H5.500z" fill="#f3f3f3"/><path d="M2 1.200H15.600L12 4.800H5.600z" fill="#7f8c84"/></svg>
<svg style="left:1135px;top:41px;" width="28" height="28" viewBox="0 0 28 28"><circle cx="17.100" cy="11" r="9.100" fill="#fff" stroke="#3b7fce" stroke-width="1.900"/><path d="M10.300 18L2.300 26" stroke="#4a7ebb" stroke-width="3.600" stroke-linecap="round"/></svg>
<div style="left:1065.2px;top:604.2px;width:5px;height:16.4px;background:#8fbd80;border-radius:2.5px;opacity:.93;"></div>
<div style="left:1073.8px;top:597.4px;width:4.8px;height:25.2px;background:#dddddd;border-radius:2.4px;opacity:.93;"></div>
<div style="left:1082.1px;top:605.6px;width:4.9px;height:12.4px;background:#8fbd80;border-radius:2.45px;opacity:.93;"></div>
<div style="left:1090.5px;top:589.2px;width:4.9px;height:31px;background:#b3b7b3;border-radius:2.45px;opacity:.93;"></div>
<div style="left:1098.8px;top:604.2px;width:5.1px;height:24.4px;background:#8fbd80;border-radius:2.55px;opacity:.93;"></div>
<div style="left:1107.2px;top:601.3px;width:4.8px;height:18.9px;background:#babeba;border-radius:2.4px;opacity:.93;"></div>
<span id="t235" style="top:596.12px;font-size:23.4px;color:#8fbd80;font-weight:700;left:1117.1px;transform:scaleX(.797);transform-origin:0 0;-webkit-text-stroke:0.900px #8fbd80;opacity:.95;">Mister-Office</span>
</div></body></html>
